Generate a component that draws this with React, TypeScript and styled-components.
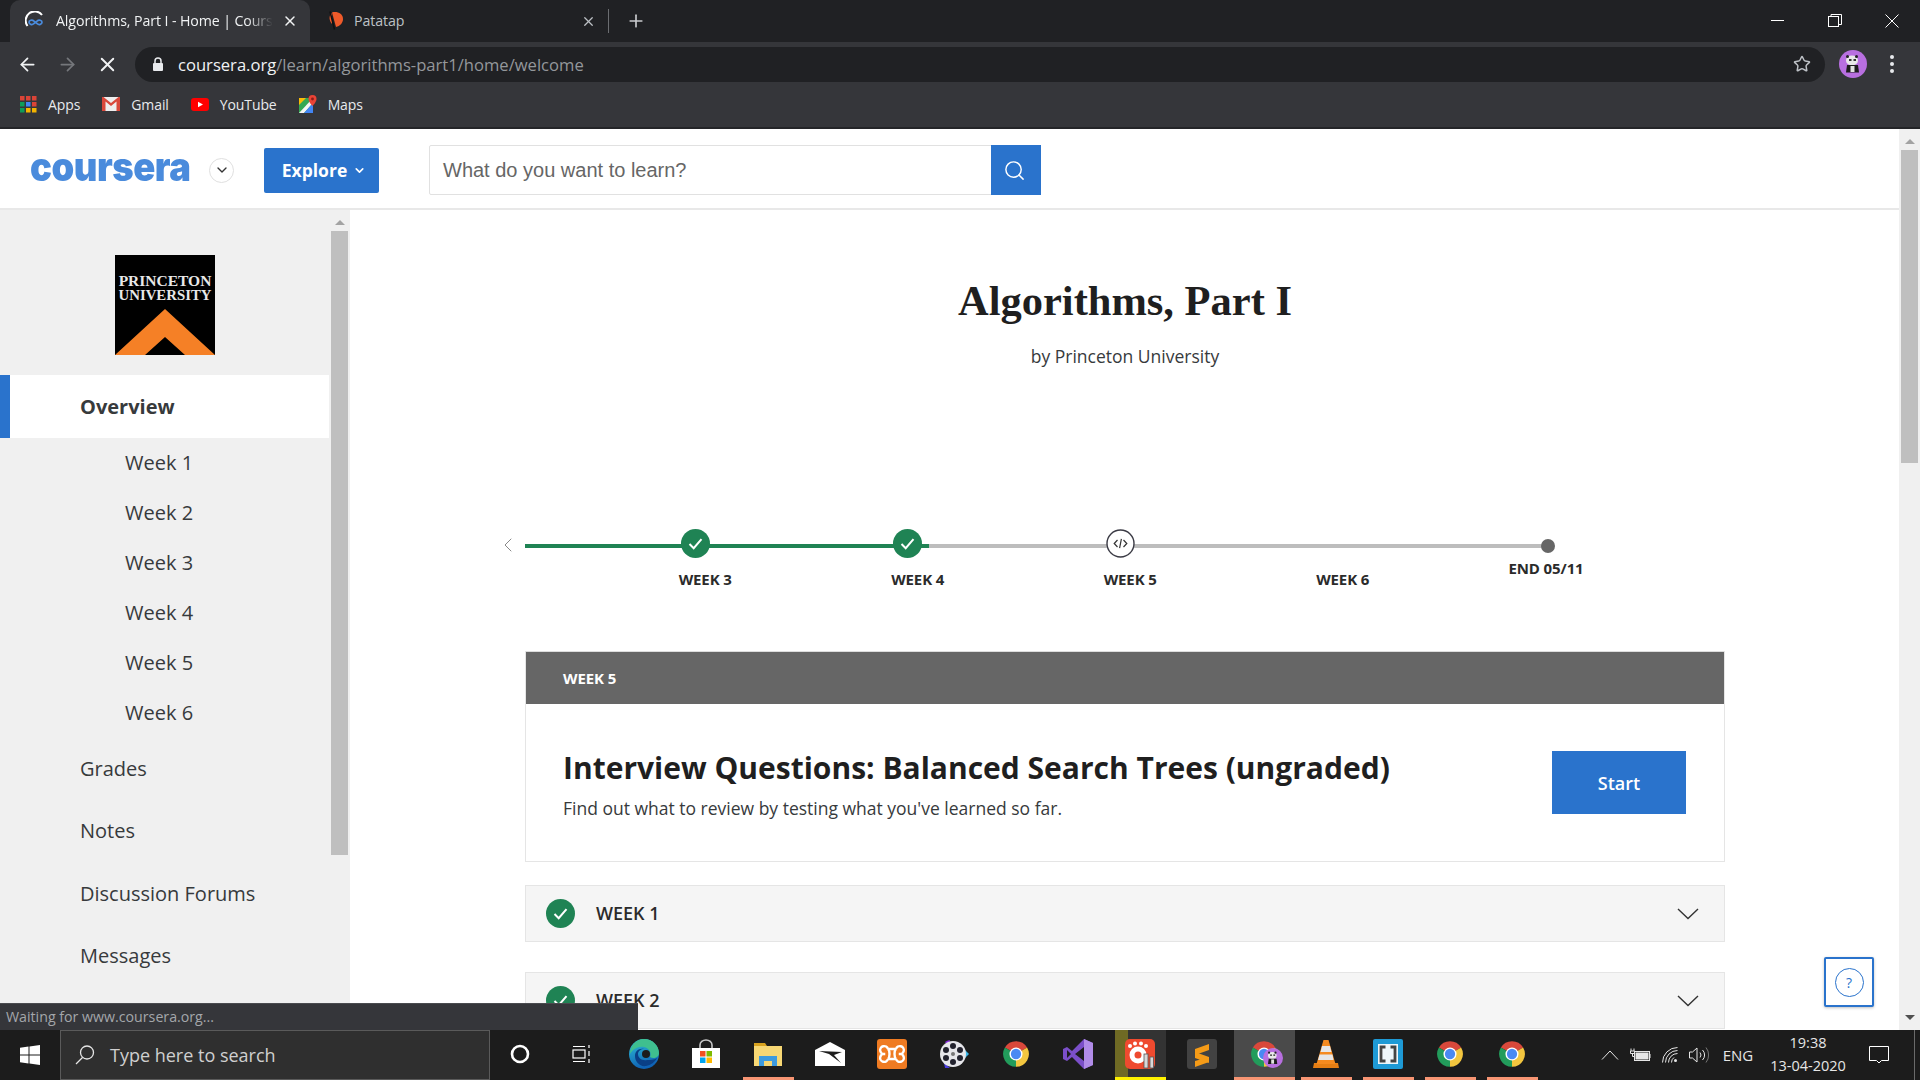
import { ReactNode } from 'react'
import styled, { createGlobalStyle } from 'styled-components'
import { ArrowLeft, ArrowRight, ChevronDown, ChevronLeft, Plus, Search, Star, X } from 'lucide-react'

const GlobalStyle = createGlobalStyle`
  html, body {
    margin: 0;
    height: 100%;
    overflow: hidden;
    background: #fff;
    font-family: 'Open Sans', 'Noto Sans', sans-serif;
  }
  * {
    box-sizing: border-box;
  }
`

const Screen = styled.div`
  width: 1920px;
  height: 1080px;
  display: flex;
  flex-direction: column;
  overflow: hidden;
`

/* browser chrome */

const TabStrip = styled.div`
  height: 42px;
  flex: none;
  display: flex;
  align-items: flex-end;
  padding-left: 10px;
  background: #202124;
`

const Tab = styled.div<{ $active?: boolean }>`
  width: ${({ $active }) => ($active ? '300px' : '298px')};
  height: 42px;
  display: flex;
  align-items: center;
  padding: 0 12px 0 ${({ $active }) => ($active ? '15px' : '17px')};
  gap: 9px;
  border-radius: 10px 10px 0 0;
  background: ${({ $active }) => ($active ? '#35363a' : 'transparent')};
  color: ${({ $active }) => ($active ? '#f1f3f4' : '#bdc1c6')};
`

const TabTitle = styled.span<{ $fade?: boolean }>`
  flex: 1;
  padding-bottom: 1px;
  white-space: nowrap;
  font-size: 14.2px;
  letter-spacing: -0.1px;
  ${({ $fade }) =>
    $fade
      ? 'mask-image: linear-gradient(to right, #000 88%, transparent 100%);'
      : ''}
`

const TabDivider = styled.div`
  width: 1px;
  height: 24px;
  margin-bottom: 9px;
  background: #6b6d71;
`

const NewTab = styled.div`
  width: 54px;
  height: 42px;
  display: flex;
  align-items: center;
  justify-content: center;
  color: #c8cacd;
`

const WindowControls = styled.div`
  margin-left: auto;
  height: 42px;
  display: flex;
  align-items: center;
  color: #fff;
`

const WindowButton = styled.div`
  width: 57px;
  height: 36px;
  display: flex;
  align-items: center;
  justify-content: center;
`

const Toolbar = styled.div`
  height: 43px;
  flex: none;
  display: flex;
  align-items: center;
  padding: 1px 0 0 7px;
  background: #35363a;
`

const NavButton = styled.div<{ $dim?: boolean }>`
  width: 40px;
  height: 36px;
  display: flex;
  align-items: center;
  justify-content: center;
  color: ${({ $dim }) => ($dim ? '#75777b' : '#f1f3f4')};
`

const Omnibox = styled.div`
  width: 1690px;
  height: 35px;
  margin-left: 8px;
  display: flex;
  align-items: center;
  padding: 0 14px 0 17px;
  border-radius: 18px;
  background: #202124;
  font-size: 16.6px;
  color: #94979b;
`

const Host = styled.span`
  color: #f1f3f4;
`

const Address = styled.span`
  margin-left: 14px;
  flex: 1;
`

const ToolbarEnd = styled.div`
  display: flex;
  align-items: center;
  margin-left: 14px;
  gap: 23px;
`

const MenuDots = styled.div`
  width: 6px;
  display: flex;
  flex-direction: column;
  gap: 3px;
  i {
    width: 4px;
    height: 4px;
    border-radius: 50%;
    background: #e8eaed;
  }
`

const BookmarkBar = styled.div`
  height: 42px;
  flex: none;
  display: flex;
  align-items: center;
  padding: 0 0 4px 20px;
  gap: 22px;
  background: #35363a;
`

const Bookmark = styled.div`
  display: flex;
  align-items: center;
  gap: 11px;
  font-size: 14px;
  letter-spacing: -0.1px;
  color: #e8eaed;
`

const ChromeEdge = styled.div`
  height: 2px;
  flex: none;
  background: #242528;
`

/* page */

const Viewport = styled.div`
  position: relative;
  flex: 1;
  min-height: 0;
  display: flex;
  background: #fff;
`

const PageColumn = styled.div`
  flex: 1;
  min-width: 0;
  display: flex;
  flex-direction: column;
`

const SiteHeader = styled.header`
  height: 81px;
  flex: none;
  display: flex;
  align-items: center;
  padding: 3px 0 0 30px;
  border-bottom: 2px solid #e8e8e8;
`

const LogoBox = styled.div`
  width: 160px;
  height: 40px;
  padding-bottom: 6px;
  display: flex;
  align-items: center;
  overflow: visible;
`

const LogoWord = styled.span`
  font-family: Inter, 'Open Sans', sans-serif;
  font-size: 40px;
  font-weight: 900;
  letter-spacing: -0.5px;
  line-height: 40px;
  color: #4a8bdc;
  transform: scale(0.91, 1);
  transform-origin: left center;
`

const RoundChevron = styled.div`
  width: 25px;
  height: 25px;
  margin-left: 19px;
  display: flex;
  align-items: center;
  justify-content: center;
  border: 1px solid #e0e0e0;
  border-radius: 50%;
  color: #333;
`

const ExploreButton = styled.div`
  width: 115px;
  height: 45px;
  margin-left: 30px;
  padding-left: 5px;
  display: flex;
  align-items: center;
  justify-content: center;
  gap: 6px;
  border-radius: 2px;
  background: #2a73cc;
  color: #fff;
  font-size: 17.5px;
  font-weight: 700;
`

const SearchBox = styled.div`
  width: 612px;
  height: 50px;
  margin-left: 50px;
  display: flex;
  border: 1px solid #e1e1e1;
  border-radius: 2px;
`

const SearchText = styled.div`
  flex: 1;
  display: flex;
  align-items: center;
  padding-left: 13px;
  font-family: 'Liberation Sans', Arial, sans-serif;
  font-size: 20px;
  color: #666;
`

const SearchButton = styled.div`
  width: 50px;
  margin: -1px -1px -1px 0;
  padding-right: 3px;
  display: flex;
  align-items: center;
  justify-content: center;
  background: #2a73cc;
  color: #fff;
`

const Workspace = styled.div`
  flex: 1;
  min-height: 0;
  display: flex;
`

const Sidebar = styled.aside`
  width: 350px;
  flex: none;
  display: flex;
  background: #f0f0f0;
  overflow: hidden;
`

const SideNav = styled.nav`
  width: 329px;
  flex: none;
  padding-top: 45px;
`

const SchoolLogo = styled.div`
  width: 100px;
  height: 100px;
  margin: 0 auto 20px;
`

const NavOverview = styled.div`
  height: 63px;
  margin-bottom: -1px;
  display: flex;
  align-items: center;
  padding-left: 70px;
  border-left: 10px solid #2a73cc;
  background: #fff;
  color: #373a3c;
  font-size: 20px;
  font-weight: 700;
`

const NavWeek = styled.div`
  height: 50px;
  display: flex;
  align-items: center;
  padding-left: 125px;
  color: #373a3c;
  font-size: 20px;
`

const NavLink = styled.div`
  height: 62.5px;
  display: flex;
  align-items: center;
  padding-left: 80px;
  color: #373a3c;
  font-size: 20px;
`

const SideScroll = styled.div`
  width: 17px;
  margin-left: 2px;
  flex: none;
  display: flex;
  flex-direction: column;
  align-items: center;
`

const ArrowUp = styled.div`
  width: 0;
  height: 0;
  flex: none;
  border-left: 5px solid transparent;
  border-right: 5px solid transparent;
  border-bottom: 5px solid #a3a3a3;
`

const ArrowDown = styled.div`
  width: 0;
  height: 0;
  flex: none;
  border-left: 5px solid transparent;
  border-right: 5px solid transparent;
  border-top: 5px solid #505050;
`

const SideThumb = styled.div`
  width: 17px;
  height: 624px;
  margin-top: 6px;
  background: #bfbfbf;
`

const SideArrowWrap = styled.div`
  height: 15px;
  display: flex;
  align-items: flex-end;
`

const Content = styled.main`
  flex: 1;
  min-width: 0;
  overflow: hidden;
  padding: 67px 174px 0 175px;
`

const CourseTitle = styled.h1`
  margin: 0;
  text-align: center;
  font-family: 'Liberation Serif', 'Times New Roman', serif;
  font-size: 42.5px;
  line-height: 48px;
  font-weight: 700;
  color: #1f1f1f;
`

const CourseBy = styled.div`
  margin-top: 19px;
  text-align: center;
  font-size: 17.5px;
  line-height: 24px;
  color: #373a3c;
`

const TimelineRow = styled.div`
  margin: 161px 0 0 -29px;
  display: flex;
`

const TimelineBack = styled.div`
  width: 29px;
  height: 30px;
  color: #888;
  display: flex;
  align-items: center;
  padding-top: 1px;
`

const Track = styled.div`
  width: 1023px;
  height: 60px;
  display: grid;
  grid-template-columns: repeat(4, 212.5px) 194px;
  padding-left: 74px;
  background: linear-gradient(to right, #1f8354 0 404px, #bdbdbd 404px) 0 15px / 1023px 4px
    no-repeat;
`

const TrackStop = styled.div`
  display: flex;
  flex-direction: column;
  align-items: center;
`

const StopNode = styled.div`
  height: 28px;
  margin: 0 20px 12px 0;
`

const EndDot = styled.div`
  width: 14px;
  height: 14px;
  margin: 10px 0 5px 4px;
  border-radius: 50%;
  background: #666;
`

const StopLabel = styled.div`
  font-size: 15px;
  line-height: 20px;
  font-weight: 700;
  letter-spacing: -0.1px;
  white-space: nowrap;
  color: #2b2b2b;
`

const ActivityCard = styled.section`
  margin: 62px 0 23px;
  border: 1px solid #e5e5e5;
  border-top: 0;
`

const ActivityBar = styled.div`
  height: 53px;
  display: flex;
  align-items: center;
  padding-left: 37px;
  background: #666;
  border-top: 1px solid #ddd;
  color: #fff;
  font-size: 15px;
  font-weight: 700;
  letter-spacing: -0.1px;
`

const ActivityBody = styled.div`
  height: 157px;
  display: flex;
  align-items: center;
  justify-content: space-between;
  padding: 0 38px 0 37px;
`

const ActivityCopy = styled.div`
  padding-top: 2px;
`

const ActivityTitle = styled.h2`
  margin: 0;
  font-size: 30px;
  line-height: 40px;
  font-weight: 700;
  color: #1f1f1f;
`

const ActivityText = styled.p`
  margin: 8px 0 0;
  font-size: 17.5px;
  line-height: 24px;
  color: #373a3c;
`

const StartButton = styled.div`
  width: 134px;
  height: 63px;
  display: flex;
  align-items: center;
  justify-content: center;
  background: #2a73cc;
  color: #fff;
  font-size: 18px;
  font-weight: 600;
`

const WeekRow = styled.div`
  height: 57px;
  display: flex;
  align-items: center;
  padding: 0 25px 0 20px;
  border: 1px solid #e5e5e5;
  background: #f5f5f5;
  color: #2b2b2b;
  font-size: 18px;
  font-weight: 600;
  & + & {
    margin-top: 30px;
  }
`

const WeekName = styled.span`
  flex: 1;
  margin-left: 21px;
  padding-bottom: 2px;
`

const PageScroll = styled.div`
  width: 21px;
  flex: none;
  display: flex;
  flex-direction: column;
  align-items: center;
  background: #f0f0f0;
`

const PageThumb = styled.div`
  width: 17px;
  height: 313px;
  margin-top: 6px;
  background: #bfbfbf;
`

const PageArrowTop = styled.div`
  height: 15px;
  display: flex;
  align-items: flex-end;
`

const PageArrowBottom = styled.div`
  margin-top: auto;
  height: 15px;
`

const HelpButton = styled.div`
  position: absolute;
  right: 46px;
  bottom: 23px;
  width: 50px;
  height: 50px;
  display: flex;
  align-items: center;
  justify-content: center;
  border: 2px solid #2a73cc;
  border-radius: 2px;
  background: #fff;
  box-shadow: 0 1px 3px rgba(0, 0, 0, 0.25);
`

const HelpCircle = styled.div`
  width: 29px;
  height: 29px;
  display: flex;
  align-items: center;
  justify-content: center;
  border: 1.5px solid #2a73cc;
  border-radius: 50%;
  color: #2a73cc;
  font-size: 14px;
`

const StatusBubble = styled.div`
  position: absolute;
  left: 0;
  bottom: 0;
  width: 638px;
  height: 27px;
  display: flex;
  align-items: center;
  padding: 0 0 2px 6px;
  background: #35363a;
  border-top: 1px solid #4a4b4f;
  color: #a4a7ab;
  font-size: 14.2px;
`

/* taskbar */

const Taskbar = styled.footer`
  height: 50px;
  flex: none;
  display: flex;
  align-items: center;
  background: #1c1c1c;
`

const StartTile = styled.div`
  width: 60px;
  height: 50px;
  display: flex;
  align-items: center;
  justify-content: center;
`

const TaskSearch = styled.div`
  width: 430px;
  height: 50px;
  display: flex;
  align-items: center;
  gap: 15px;
  padding-left: 14px;
  background: #2f2f2f;
  border: 1px solid #5a5a5a;
  color: #cfcfcf;
  font-size: 18px;
`

const TaskList = styled.div`
  display: flex;
  margin-left: -1px;
`

const TaskSlot = styled.div`
  width: 62px;
  height: 50px;
  display: flex;
  justify-content: center;
`

const TaskItem = styled.div<{ $state?: 'open' | 'active' | 'flash' }>`
  position: relative;
  width: ${({ $state }) => ($state === 'active' ? '61px' : '51px')};
  height: 50px;
  display: flex;
  align-items: center;
  justify-content: center;
  border-bottom: 3px solid
    ${({ $state }) =>
      $state === 'flash' ? '#fff200' : $state ? '#f79573' : 'transparent'};
  background: ${({ $state }) =>
    $state === 'active'
      ? '#4a4a4a'
      : $state === 'flash'
        ? 'linear-gradient(to right, #6f6a24 25%, #333 25%)'
        : 'transparent'};
`

const TaskBadge = styled.div`
  position: absolute;
  right: 12px;
  bottom: 4px;
`

const Tray = styled.div`
  margin-left: auto;
  height: 50px;
  display: flex;
  align-items: center;
  color: #e6e6e6;
`

const TrayIcon = styled.div<{ $w: number }>`
  width: ${({ $w }) => $w}px;
  display: flex;
  justify-content: center;
`

const TrayLang = styled.div`
  width: 48px;
  text-align: center;
  font-size: 15px;
`

const TrayClock = styled.div`
  width: 92px;
  padding-bottom: 2px;
  text-align: center;
  font-size: 14.5px;
  line-height: 23px;
`

const ShowDesktop = styled.div`
  width: 1px;
  height: 50px;
  margin: 0 5px 0 10px;
  background: #6a6a6a;
`

/* drawings */

const ChromeLogo = ({ size = 28 }: { size?: number }) => (
  <svg width={size} height={size} viewBox="0 0 24 24">
    <path d="M12 12L2.47 6.5A11 11 0 0 1 21.53 6.5Z" fill="#d9483b" />
    <path d="M12 12L21.53 6.5A11 11 0 0 1 12 23Z" fill="#f3c63f" />
    <path d="M12 12L12 23A11 11 0 0 1 2.47 6.5Z" fill="#229c5b" />
    <circle cx="12" cy="12" r="5.6" fill="#fff" />
    <circle cx="12" cy="12" r="4.4" fill="#4a89f3" />
  </svg>
)

const Panda = ({ size = 28 }: { size?: number }) => (
  <svg width={size} height={size} viewBox="0 0 28 28">
    <circle cx="14" cy="14" r="14" fill="#b86fe0" />
    <ellipse cx="13" cy="10.5" rx="6" ry="5" fill="#e9e9e9" />
    <circle cx="8.5" cy="6.5" r="1.5" fill="#222" />
    <circle cx="17.5" cy="6.5" r="1.5" fill="#222" />
    <rect x="10" y="9" width="2.5" height="2" fill="#333" />
    <rect x="14.5" y="9" width="2.5" height="2" fill="#333" />
    <path d="M8 15h11l1 7.5H7Z" fill="#1d1d1d" />
    <rect x="11.5" y="16" width="4" height="6" fill="#e3e3e3" />
  </svg>
)

const CheckBadge = () => (
  <svg width="29" height="29" viewBox="0 0 29 29">
    <circle cx="14.5" cy="14.5" r="14.5" fill="#1f8354" />
    <path d="M8.5 15l4.2 4.2 7.8-9" fill="none" stroke="#fff" strokeWidth="2" />
  </svg>
)

const CodeBadge = () => (
  <svg width="29" height="29" viewBox="0 0 29 29">
    <circle cx="14.5" cy="14.5" r="13.5" fill="#fff" stroke="#3a3a44" strokeWidth="1.4" />
    <path
      d="M11.5 11l-3.3 3.5 3.3 3.5M17.5 11l3.3 3.5-3.3 3.5M15.4 9.8l-1.8 9.4"
      fill="none"
      stroke="#333"
      strokeWidth="1.2"
    />
  </svg>
)

const DownCaret = () => (
  <svg width="22" height="12" viewBox="0 0 22 12">
    <path d="M1 1l10 9.5L21 1" fill="none" stroke="#333" strokeWidth="1.4" />
  </svg>
)

const SchoolMark = () => (
  <svg width="100" height="100" viewBox="0 0 100 100">
    <rect width="100" height="100" fill="#000" />
    <text
      x="50"
      y="31"
      textAnchor="middle"
      fontFamily="'Liberation Serif', serif"
      fontWeight="700"
      fontSize="15.5"
      fill="#e8e8e8"
    >
      PRINCETON
    </text>
    <text
      x="50"
      y="45"
      textAnchor="middle"
      fontFamily="'Liberation Serif', serif"
      fontWeight="700"
      fontSize="14.8"
      fill="#e8e8e8"
    >
      UNIVERSITY
    </text>
    <path d="M0 100L50 54l50 46H70L50 82 30 100Z" fill="#f58026" />
  </svg>
)

const TabLogo = () => (
  <svg width="22" height="20" viewBox="0 0 22 20">
    <path d="M2.5 15A8 8 0 0 1 17 4" fill="none" stroke="#fff" strokeWidth="2" />
    <path
      d="M9 12.5c-2 2-5 .8-5-1.200s3-3.200 5-1.200l3 2.400c2 2 5 .8 5-1.200s-3-3.200-5-1.200z"
      fill="none"
      stroke="#4a8bdc"
      strokeWidth="1.7"
    />
  </svg>
)

const PatatapLogo = () => (
  <svg width="18" height="20" viewBox="0 0 18 20">
    <path d="M5 1.5c5-1.500 11 1 11 6.500 0 4-3 7-7 8z" fill="#ef5a2a" />
    <path d="M5 2c-3 2-3.500 7 0 11z" fill="#ef5a2a" />
    <path d="M3 .5L7.5 18.500" stroke="#111" strokeWidth="1.6" />
  </svg>
)

const LockIcon = () => (
  <svg width="12" height="14" viewBox="0 0 12 14">
    <rect x="1" y="6" width="10" height="8" rx="1" fill="#e8eaed" />
    <path d="M3 6V4a3 3 0 0 1 6 0v2" fill="none" stroke="#e8eaed" strokeWidth="1.5" />
  </svg>
)

const AppsIcon = () => {
  const colors = ['#db4437', '#db4437', '#db4437', '#0f9d58', '#4285f4', '#db4437', '#0f9d58', '#f4b400', '#f4b400']
  return (
    <svg width="17" height="17" viewBox="0 0 17 17">
      {colors.map((fill, i) => (
        <rect key={i} x={(i % 3) * 6} y={Math.floor(i / 3) * 6} width="4.5" height="4.5" fill={fill} />
      ))}
    </svg>
  )
}

const GmailIcon = () => (
  <svg width="18" height="14" viewBox="0 0 18 14">
    <rect width="18" height="14" fill="#eee" />
    <path d="M0 0v14h3.500V4.500L9 9l5.500-4.500V14H18V0h-1.500L9 6 1.500 0Z" fill="#d9483b" />
  </svg>
)

const YoutubeIcon = () => (
  <svg width="18" height="13" viewBox="0 0 18 13">
    <rect width="18" height="13" rx="3" fill="#f00" />
    <path d="M7 3.700v5.600l5-2.800Z" fill="#fff" />
  </svg>
)

const MapsIcon = () => (
  <svg width="18" height="18" viewBox="0 0 18 18">
    <rect y="3" width="14" height="15" fill="#34a853" />
    <path d="M0 18L14 3v5L5 18Z" fill="#f5f5f5" />
    <path d="M5 18l9-10v10Z" fill="#4285f4" />
    <path d="M0 3h7L0 10Z" fill="#fbbc05" />
    <path d="M13.5 0a4 4 0 0 1 4 4c0 3-4 7-4 7s-4-4-4-7a4 4 0 0 1 4-4Z" fill="#ea4335" />
    <circle cx="13.5" cy="4" r="1.4" fill="#8c1d18" />
  </svg>
)

const WindowsLogo = () => (
  <svg width="20" height="20" viewBox="0 0 20 20" fill="#fff">
    <path d="M0 2.800L8.500 1.600V9.500H0ZM9.500 1.500L20 0V9.500H9.500ZM0 10.500H8.500V18.400L0 17.200ZM9.500 10.500H20V20L9.500 18.500Z" />
  </svg>
)

const TaskSearchIcon = () => (
  <svg width="20" height="20" viewBox="0 0 20 20" fill="none" stroke="#e6e6e6" strokeWidth="1.3">
    <circle cx="12" cy="7.5" r="6.5" />
    <path d="M7.500 12.500L1 19" />
  </svg>
)

const CortanaIcon = () => (
  <svg width="20" height="20" viewBox="0 0 20 20">
    <circle cx="10" cy="10" r="8" fill="none" stroke="#fff" strokeWidth="2.6" />
  </svg>
)

const TaskViewIcon = () => (
  <svg width="20" height="20" viewBox="0 0 20 20" fill="none" stroke="#fff" strokeWidth="1.2">
    <rect x="1" y="6" width="12" height="8" />
    <path d="M1 2.500h12M1 17.500h12M17 1v3M17 7v5M17 15v4" />
  </svg>
)

const EdgeIcon = () => (
  <svg width="30" height="30" viewBox="0 0 30 30">
    <defs>
      <linearGradient id="edgeBlue" x1="0" y1="0" x2="0.3" y2="1">
        <stop offset="0" stopColor="#2fc3d6" />
        <stop offset="1" stopColor="#0f62b5" />
      </linearGradient>
    </defs>
    <circle cx="15" cy="15" r="15" fill="url(#edgeBlue)" />
    <path d="M15 0c9 0 15 7 15 14 0 5-6 6-9 4 2-4-1-9-6-10C9 7 4 10 1 15 1 7 7 0 15 0Z" fill="#3fbf8f" />
    <path d="M18 21c-5 1-9-2-9-6 0-3 3-5 6-5-6-1-9 3-9 7 0 6 5 11 11 10 5-1 9-4 11-8-3 2-7 2-10 2Z" fill="#0a3f86" />
    <circle cx="17" cy="15" r="4" fill="#1c1c1c" />
  </svg>
)

const StoreIcon = () => (
  <svg width="30" height="30" viewBox="0 0 30 30">
    <path d="M9 9V6a6 5 0 0 1 12 0v3" fill="none" stroke="#c8c8c8" strokeWidth="1.6" />
    <path d="M1 9h28v20H1Z" fill="#fff" />
    <rect x="9" y="12" width="5.5" height="5.5" fill="#f25022" />
    <rect x="15.5" y="12" width="5.5" height="5.5" fill="#7fba00" />
    <rect x="9" y="18.5" width="5.5" height="5.5" fill="#00a4ef" />
    <rect x="15.5" y="18.5" width="5.5" height="5.5" fill="#ffb900" />
  </svg>
)

const FolderIcon = () => (
  <svg width="28" height="24" viewBox="0 0 28 24">
    <path d="M0 1h11l2 3H0Z" fill="#d8a21f" />
    <path d="M0 4h28v20H0Z" fill="#f7d774" />
    <path d="M5 24V14h18v10h-5v-5h-8v5Z" fill="#3d9ade" />
  </svg>
)

const MailIcon = () => (
  <svg width="30" height="24" viewBox="0 0 30 24">
    <path d="M0 8L15 0l15 8v16H0Z" fill="#fff" />
    <path d="M4 9l23 1-8 3 7 8-12-9Z" fill="#1c1c1c" />
  </svg>
)

const XamppIcon = () => (
  <svg width="30" height="30" viewBox="0 0 30 30">
    <rect width="30" height="30" rx="3" fill="#ef7b22" />
    <path
      d="M11 10h8M11 20h8M11 10a4 4 0 1 0-3 5 4 4 0 1 0 3 5M19 10a4 4 0 1 1 3 5 4 4 0 1 1-3 5M11 10c2 2 2 8 0 10M19 10c-2 2-2 8 0 10"
      fill="none"
      stroke="#fff"
      strokeWidth="2.4"
    />
  </svg>
)

const ReelIcon = () => (
  <svg width="30" height="30" viewBox="0 0 30 30">
    <path d="M6 3a14 14 0 0 1 5-2l-2 6Z" fill="#8a2be2" />
    <path d="M24 9l6 6-6 6Z" fill="#3ab6e8" />
    <path d="M5 24l6 5-5 0Z" fill="#4a3de0" />
    <circle cx="14" cy="15" r="13" fill="#e6e6ea" />
    {[
      [14, 7],
      [21, 11],
      [21, 19],
      [14, 23],
      [7, 19],
      [7, 11],
    ].map(([cx, cy]) => (
      <circle key={`${cx}-${cy}`} cx={cx} cy={cy} r="3" fill="#22222e" />
    ))}
    <circle cx="14" cy="15" r="2" fill="#777" />
  </svg>
)

const VisualStudioIcon = () => (
  <svg width="30" height="30" viewBox="0 0 30 30">
    <path d="M21 0l9 4v22l-9 4-12-12-5 4-4-2V10l4-2 5 4Z" fill="#7b4fc9" />
    <path d="M21 0l9 4v22l-9 4Z" fill="#b18ce8" />
    <path d="M21 8v14l-9-7ZM4 11v8l4-4Z" fill="#1c1c1c" />
  </svg>
)

const GomIcon = () => (
  <svg width="30" height="30" viewBox="0 0 30 30">
    <rect width="30" height="30" rx="5" fill="#ef4a2f" />
    <circle cx="13" cy="16" r="8.5" fill="#fff" />
    <circle cx="13" cy="16" r="3.5" fill="#ef4a2f" />
    <circle cx="5" cy="7" r="2" fill="#fff" />
    <circle cx="10" cy="4.5" r="2" fill="#fff" />
    <circle cx="16" cy="4.5" r="2" fill="#fff" />
    <circle cx="21" cy="7" r="2" fill="#fff" />
    <rect x="19" y="15" width="4" height="14" fill="#d8d8d8" stroke="#555" strokeWidth="0.8" />
    <rect x="25" y="18" width="3.5" height="11" fill="#d8d8d8" stroke="#555" strokeWidth="0.8" />
  </svg>
)

const SublimeIcon = () => (
  <svg width="30" height="30" viewBox="0 0 30 30">
    <rect width="30" height="30" rx="3" fill="#424242" />
    <path d="M22 5v6L8 16v-6ZM8 13l14 5v6L8 19ZM22 18v5L8 28v-6Z" fill="#f59b17" />
  </svg>
)

const VlcIcon = () => (
  <svg width="26" height="30" viewBox="0 0 26 30">
    <path d="M1 24h24l1 5H0Z" fill="#e67e14" />
    <path d="M10.5 1h5l7 24H3.500Z" fill="#f58a1f" />
    <path d="M9 7h8l1.500 6h-11ZM6.500 15.500h13l1 5.500H5Z" fill="#e6e6e6" />
  </svg>
)

const BracketsIcon = () => (
  <svg width="30" height="30" viewBox="0 0 30 30">
    <rect width="30" height="30" rx="2" fill="#1e9ad6" />
    <rect x="5" y="5" width="20" height="20" fill="#eef6fa" />
    <path d="M12.500 8H8v14h4.500M17.500 8H22v14h-4.500" fill="none" stroke="#444" strokeWidth="2.8" />
  </svg>
)

const BatteryIcon = () => (
  <svg width="21" height="14" viewBox="0 0 21 14" fill="none" stroke="#e6e6e6">
    <rect x="4.5" y="3.5" width="15" height="9" />
    <rect x="5.5" y="4.5" width="13" height="7" fill="#e6e6e6" stroke="none" />
    <path d="M20 6v4M1 .5v2.500M4 .5v2.500M.5 3h4v2.500h-4ZM2.500 5.500v3h2" />
  </svg>
)

const WifiIcon = () => (
  <svg width="16" height="16" viewBox="0 0 16 16" fill="none" stroke="#e6e6e6">
    <path d="M.5 15.500A15 15 0 0 1 15.500 .5M3.500 15.500A12 12 0 0 1 15.500 3.500M6.500 15.500A9 9 0 0 1 15.500 6.500M9.500 15.500A6 6 0 0 1 12 10.500" />
    <circle cx="13.5" cy="13.5" r="1.5" fill="#e6e6e6" stroke="none" />
  </svg>
)

const SpeakerIcon = () => (
  <svg width="20" height="16" viewBox="0 0 20 16" fill="none" stroke="#e6e6e6">
    <path d="M.5 5h3L8 1v14l-4.500-4H.5ZM11 5.500a4 4 0 0 1 0 5M13.500 3a7 7 0 0 1 0 10" />
    <path d="M17 .5a12 12 0 0 1 0 15" stroke="#777" />
  </svg>
)

const NotificationIcon = () => (
  <svg width="20" height="18" viewBox="0 0 20 18" fill="none" stroke="#fff">
    <path d="M.5 .5h19v14h-7l-2.500 2.500-2.500-2.500h-7Z" />
  </svg>
)

const MinimizeIcon = () => (
  <svg width="14" height="2" viewBox="0 0 14 2">
    <rect width="13" height="1" fill="#fff" />
  </svg>
)

const RestoreIcon = () => (
  <svg width="14" height="14" viewBox="0 0 14 14" fill="none" stroke="#fff">
    <rect x=".5" y="2.5" width="10" height="10" />
    <path d="M3 2.500V.5h10.500v10h-3" />
  </svg>
)

const CloseIcon = () => (
  <svg width="14" height="14" viewBox="0 0 14 14" fill="none" stroke="#fff">
    <path d="M.5 .5l13 13M13.500 .5l-13 13" />
  </svg>
)

interface TaskEntry {
  readonly icon: ReactNode
  readonly state?: 'open' | 'active' | 'flash'
  readonly badge?: ReactNode
}

const TASK_ITEMS: ReadonlyArray<TaskEntry> = [
  { icon: <CortanaIcon /> },
  { icon: <TaskViewIcon /> },
  { icon: <EdgeIcon /> },
  { icon: <StoreIcon /> },
  { icon: <FolderIcon />, state: 'open' },
  { icon: <MailIcon /> },
  { icon: <XamppIcon /> },
  { icon: <ReelIcon /> },
  { icon: <ChromeLogo /> },
  { icon: <VisualStudioIcon /> },
  { icon: <GomIcon />, state: 'flash' },
  { icon: <SublimeIcon /> },
  { icon: <ChromeLogo />, state: 'active', badge: <Panda size={20} /> },
  { icon: <VlcIcon />, state: 'open' },
  { icon: <BracketsIcon />, state: 'open' },
  { icon: <ChromeLogo />, state: 'open' },
  { icon: <ChromeLogo />, state: 'open' },
]

const WEEKS = ['Week 1', 'Week 2', 'Week 3', 'Week 4', 'Week 5', 'Week 6']
const LINKS = ['Grades', 'Notes', 'Discussion Forums', 'Messages']

export default function App() {
  return (
    <Screen>
      <GlobalStyle />

      <TabStrip>
        <Tab $active>
          <TabLogo />
          <TabTitle $fade>Algorithms, Part I - Home | Cours</TabTitle>
          <X size={16} strokeWidth={2.2} />
        </Tab>
        <Tab>
          <PatatapLogo />
          <TabTitle>Patatap</TabTitle>
          <X size={15} strokeWidth={2} />
        </Tab>
        <TabDivider />
        <NewTab>
          <Plus size={20} strokeWidth={2} />
        </NewTab>
        <WindowControls>
          <WindowButton>
            <MinimizeIcon />
          </WindowButton>
          <WindowButton>
            <RestoreIcon />
          </WindowButton>
          <WindowButton>
            <CloseIcon />
          </WindowButton>
        </WindowControls>
      </TabStrip>

      <Toolbar>
        <NavButton>
          <ArrowLeft size={21} />
        </NavButton>
        <NavButton $dim>
          <ArrowRight size={21} />
        </NavButton>
        <NavButton>
          <X size={23} />
        </NavButton>
        <Omnibox>
          <LockIcon />
          <Address>
            <Host>coursera.org</Host>/learn/algorithms-part1/home/welcome
          </Address>
          <Star size={18} color="#bdc1c6" />
        </Omnibox>
        <ToolbarEnd>
          <Panda />
          <MenuDots>
            <i />
            <i />
            <i />
          </MenuDots>
        </ToolbarEnd>
      </Toolbar>

      <BookmarkBar>
        <Bookmark>
          <AppsIcon />
          Apps
        </Bookmark>
        <Bookmark>
          <GmailIcon />
          Gmail
        </Bookmark>
        <Bookmark>
          <YoutubeIcon />
          YouTube
        </Bookmark>
        <Bookmark>
          <MapsIcon />
          Maps
        </Bookmark>
      </BookmarkBar>
      <ChromeEdge />

      <Viewport>
        <PageColumn>
          <SiteHeader>
            <LogoBox>
              <LogoWord>coursera</LogoWord>
            </LogoBox>
            <RoundChevron>
              <ChevronDown size={16} />
            </RoundChevron>
            <ExploreButton>
              Explore
              <ChevronDown size={13} strokeWidth={3} />
            </ExploreButton>
            <SearchBox>
              <SearchText>What do you want to learn?</SearchText>
              <SearchButton>
                <Search size={23} strokeWidth={1.5} />
              </SearchButton>
            </SearchBox>
          </SiteHeader>

          <Workspace>
            <Sidebar>
              <SideNav>
                <SchoolLogo>
                  <SchoolMark />
                </SchoolLogo>
                <NavOverview>Overview</NavOverview>
                {WEEKS.map(week => (
                  <NavWeek key={week}>{week}</NavWeek>
                ))}
                {LINKS.map(link => (
                  <NavLink key={link}>{link}</NavLink>
                ))}
              </SideNav>
              <SideScroll>
                <SideArrowWrap>
                  <ArrowUp />
                </SideArrowWrap>
                <SideThumb />
              </SideScroll>
            </Sidebar>

            <Content>
              <CourseTitle>Algorithms, Part I</CourseTitle>
              <CourseBy>by Princeton University</CourseBy>

              <TimelineRow>
                <TimelineBack>
                  <ChevronLeft size={24} strokeWidth={1} />
                </TimelineBack>
                <Track>
                  <TrackStop>
                    <StopNode>
                      <CheckBadge />
                    </StopNode>
                    <StopLabel>WEEK 3</StopLabel>
                  </TrackStop>
                  <TrackStop>
                    <StopNode>
                      <CheckBadge />
                    </StopNode>
                    <StopLabel>WEEK 4</StopLabel>
                  </TrackStop>
                  <TrackStop>
                    <StopNode>
                      <CodeBadge />
                    </StopNode>
                    <StopLabel>WEEK 5</StopLabel>
                  </TrackStop>
                  <TrackStop>
                    <StopNode />
                    <StopLabel>WEEK 6</StopLabel>
                  </TrackStop>
                  <TrackStop>
                    <EndDot />
                    <StopLabel>END 05/11</StopLabel>
                  </TrackStop>
                </Track>
              </TimelineRow>

              <ActivityCard>
                <ActivityBar>WEEK 5</ActivityBar>
                <ActivityBody>
                  <ActivityCopy>
                    <ActivityTitle>Interview Questions: Balanced Search Trees (ungraded)</ActivityTitle>
                    <ActivityText>Find out what to review by testing what you've learned so far.</ActivityText>
                  </ActivityCopy>
                  <StartButton>Start</StartButton>
                </ActivityBody>
              </ActivityCard>

              <WeekRow>
                <CheckBadge />
                <WeekName>WEEK 1</WeekName>
                <DownCaret />
              </WeekRow>
              <WeekRow>
                <CheckBadge />
                <WeekName>WEEK 2</WeekName>
                <DownCaret />
              </WeekRow>
            </Content>
          </Workspace>
        </PageColumn>

        <PageScroll>
          <PageArrowTop>
            <ArrowUp />
          </PageArrowTop>
          <PageThumb />
          <PageArrowBottom>
            <ArrowDown />
          </PageArrowBottom>
        </PageScroll>

        <HelpButton>
          <HelpCircle>?</HelpCircle>
        </HelpButton>
        <StatusBubble>Waiting for www.coursera.org...</StatusBubble>
      </Viewport>

      <Taskbar>
        <StartTile>
          <WindowsLogo />
        </StartTile>
        <TaskSearch>
          <TaskSearchIcon />
          Type here to search
        </TaskSearch>
        <TaskList>
          {TASK_ITEMS.map((item, i) => (
            <TaskSlot key={i}>
              <TaskItem $state={item.state}>
                {item.icon}
                {item.badge ? <TaskBadge>{item.badge}</TaskBadge> : null}
              </TaskItem>
            </TaskSlot>
          ))}
        </TaskList>
        <Tray>
          <TrayIcon $w={28}>
            <svg width="18" height="10" viewBox="0 0 18 10" fill="none" stroke="#e6e6e6">
              <path d="M1 9.500L9 1l8 8.500" />
            </svg>
          </TrayIcon>
          <TrayIcon $w={32}>
            <BatteryIcon />
          </TrayIcon>
          <TrayIcon $w={28}>
            <WifiIcon />
          </TrayIcon>
          <TrayIcon $w={30}>
            <SpeakerIcon />
          </TrayIcon>
          <TrayLang>ENG</TrayLang>
          <TrayClock>
            19:38
            <br />
            13-04-2020
          </TrayClock>
          <TrayIcon $w={50}>
            <NotificationIcon />
          </TrayIcon>
          <ShowDesktop />
        </Tray>
      </Taskbar>
    </Screen>
  )
}
